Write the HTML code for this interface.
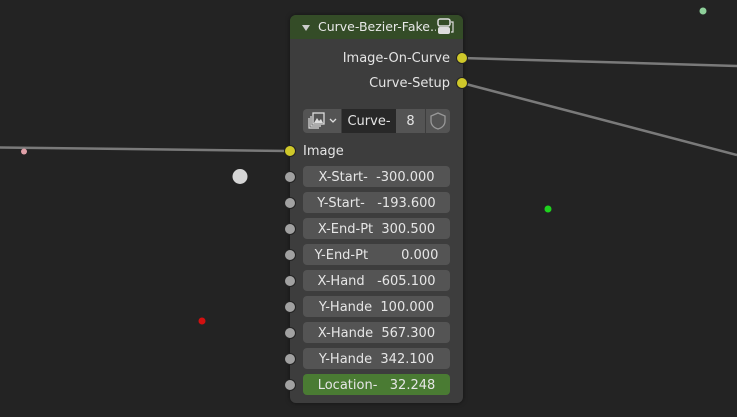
<!DOCTYPE html>
<html><head><meta charset="utf-8"><style>
body{margin:0;width:737px;height:417px;background:#232323;overflow:hidden;position:relative;font-family:"DejaVu Sans","Liberation Sans",sans-serif;font-size:13px;color:#e4e4e4}
.abs{position:absolute}
.node{left:290px;top:15px;width:173px;height:388px;background:#3d3d3d;border-radius:6px;box-shadow:0 0 4px rgba(0,0,0,.5)}
.hdr{left:290px;top:15px;width:173px;height:24px;background:#344c27;border-radius:6px 6px 0 0}
.sock{width:12px;height:12px;border-radius:50%;background:#a1a1a1;border:1px solid #222;box-sizing:border-box}
.y{background:#cfc82a}
.f{left:303px;width:147px;height:21px;background:#545454;border-radius:4px;text-align:center;line-height:23px;white-space:pre;color:#e6e6e6}
</style></head><body>
<svg class="abs" style="left:0;top:0" width="737" height="417">
<line x1="0" y1="147.5" x2="290" y2="151" stroke="#7a7a7a" stroke-width="2.5"/>
<line x1="462" y1="58" x2="737" y2="66" stroke="#7a7a7a" stroke-width="2.5"/>
<line x1="462" y1="83" x2="737" y2="155" stroke="#7a7a7a" stroke-width="2.5"/>
<circle cx="24" cy="151.5" r="3" fill="#e0a0a8"/>
<circle cx="240" cy="176.5" r="7.5" fill="#d6d6d6"/>
<circle cx="548" cy="209" r="3.5" fill="#1ed21e"/>
<circle cx="202" cy="321" r="3.5" fill="#d21010"/>
<circle cx="703" cy="11" r="3.5" fill="#8ed09a"/>
</svg>
<div class="abs node"></div>
<div class="abs hdr"></div>
<svg class="abs" style="left:301px;top:23px" width="10" height="10"><path d="M1 2h8l-4 6z" fill="#ccc"/></svg>
<div class="abs" style="left:318px;top:19px;color:#e8e8e8;font-size:12.5px;width:118px;overflow:hidden;white-space:nowrap">Curve-Bezier-Fake..</div>
<svg class="abs" style="left:436px;top:17px" width="20" height="20"><rect x="2" y="2" width="12" height="7" rx="2" fill="none" stroke="#ddd" stroke-width="1.5"/><rect x="2" y="10" width="12" height="7" rx="2" fill="#ddd"/><path d="M15 5h2v10h-2" fill="none" stroke="#ddd" stroke-width="1.2"/></svg>
<div class="abs" style="right:287px;top:51px">Image-On-Curve</div>
<div class="abs" style="right:287px;top:76px">Curve-Setup</div>
<div class="abs sock y" style="left:456px;top:52px"></div>
<div class="abs sock y" style="left:456px;top:77px"></div>
<div class="abs" style="left:303px;top:109px;width:38px;height:24px;background:#545454;border-radius:4px 0 0 4px"></div>
<svg class="abs" style="left:306px;top:111px" width="34" height="20"><path d="M3 7v10h10M5 5v10h10" fill="none" stroke="#ddd" stroke-width="1.2"/><rect x="7" y="2" width="11" height="11" fill="none" stroke="#ddd" stroke-width="1.3"/><path d="M8 12l3-5 2 3 2-2 2 4z" fill="#ddd"/><path d="M24 8l3 3 3-3" fill="none" stroke="#ddd" stroke-width="1.3"/></svg>
<div class="abs" style="left:342px;top:109px;width:54px;height:24px;background:#282828;line-height:26px;text-align:center">Curve-</div>
<div class="abs" style="left:396px;top:109px;width:29px;height:24px;background:#545454;line-height:26px;text-align:center">8</div>
<div class="abs" style="left:426px;top:109px;width:24px;height:24px;background:#545454;border-radius:0 4px 4px 0"></div>
<svg class="abs" style="left:428px;top:111px" width="20" height="20"><path d="M10 2l7 3v5c0 4-3 7-7 8-4-1-7-4-7-8V5z" fill="none" stroke="#999" stroke-width="1.3"/></svg>
<div class="abs sock y" style="left:284px;top:145px"></div>
<div class="abs" style="left:303px;top:144px">Image</div>
<div class="abs f" style="top:166px">X-Start-  -300.000</div>
<div class="abs f" style="top:192px">Y-Start-   -193.600</div>
<div class="abs f" style="top:218px">X-End-Pt  300.500</div>
<div class="abs f" style="top:244px">Y-End-Pt        0.000</div>
<div class="abs f" style="top:270px">X-Hand   -605.100</div>
<div class="abs f" style="top:296px">Y-Hande  100.000</div>
<div class="abs f" style="top:322px">X-Hande  567.300</div>
<div class="abs f" style="top:348px">Y-Hande  342.100</div>
<div class="abs f" style="top:374px;background:#4a7b33">Location-   32.248</div>
<div class="abs sock" style="left:284px;top:171px"></div>
<div class="abs sock" style="left:284px;top:197px"></div>
<div class="abs sock" style="left:284px;top:223px"></div>
<div class="abs sock" style="left:284px;top:249px"></div>
<div class="abs sock" style="left:284px;top:275px"></div>
<div class="abs sock" style="left:284px;top:301px"></div>
<div class="abs sock" style="left:284px;top:327px"></div>
<div class="abs sock" style="left:284px;top:353px"></div>
<div class="abs sock" style="left:284px;top:379px"></div>
</body></html>
